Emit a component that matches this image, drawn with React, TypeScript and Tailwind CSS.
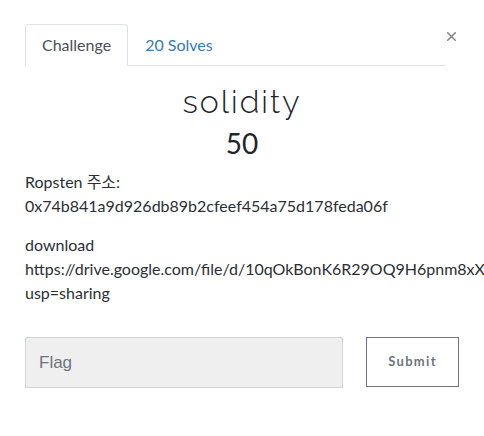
import { X } from 'lucide-react';

export default function App() {
  return (
    <div className="relative w-[484px] h-[436px] bg-white overflow-hidden font-['Lato',sans-serif] text-[#212529]">
      {/* Close */}
      <button className="absolute left-[443px] top-[27px] w-[17px] h-[19px] flex items-center justify-center text-[#888]">
        <X className="w-[15px] h-[15px]" strokeWidth={2.6} />
      </button>

      <div className="pl-[25px] pt-[24px]">
        {/* Tabs */}
        <div className="flex w-[420px] border-b border-[#dee2e6]">
          <div className="-mb-px px-4 py-2 border border-[#dee2e6] border-b-white rounded-t-[4px] text-[16px] leading-[23px] text-[#495057] bg-white">
            Challenge
          </div>
          <div className="px-4 py-2 text-[16px] leading-[23px] text-[#337ab7] border border-transparent">
            20 Solves
          </div>
        </div>

        {/* Title */}
        <div className="w-[434px] text-center">
          <h3 className="mt-[17px] text-[32px] leading-[38px] font-light tracking-[2px] text-[#212529] font-['Raleway','Lato',sans-serif]">
            solidity
          </h3>
          <h4 className="mt-[5px] text-[28px] leading-[34px] font-normal text-[#212529]">50</h4>
        </div>

        {/* Description */}
        <div className="mt-[10px] text-[16px] leading-[24px] text-[#2b2f33] whitespace-nowrap font-['Lato','Noto_Sans_CJK_KR',sans-serif]">
          <p className="mb-[15px]">
            Ropsten 주소:
            <br />
            0x74b841a9d926db89b2cfeef454a75d178feda06f
          </p>
          <p>
            download
            <br />
            https://drive.google.com/file/d/10qOkBonK6R29OQ9H6pnm8xXTw_dlKgDX/view?
            <br />
            usp=sharing
          </p>
        </div>

        {/* Submit row */}
        <div className="mt-[32px] flex items-start gap-[23px]">
          <input
            placeholder="Flag"
            className="w-[318px] h-[51px] px-[13px] bg-[#efefef] border border-[#ced4da] text-[17px] font-['Liberation_Sans',sans-serif] placeholder:text-[#6c757d] outline-none"
          />
          <button className="w-[93px] h-[50px] border border-[#6c757d] text-[#6c757d] text-[13px] font-bold tracking-[1.3px] bg-white">
            Submit
          </button>
        </div>
      </div>
    </div>
  );
}
